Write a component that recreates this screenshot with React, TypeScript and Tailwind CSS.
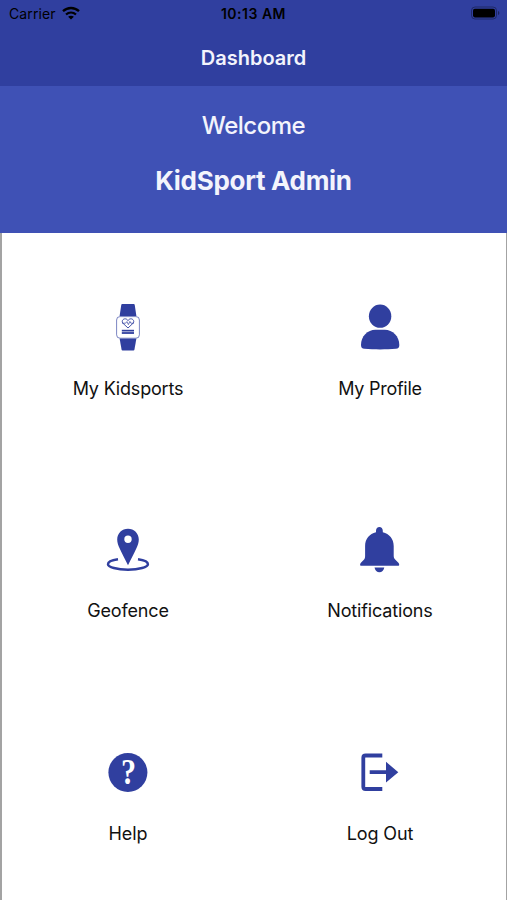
import React from 'react';
import { clsx } from 'clsx';

function WatchIcon() {
  return (
    <svg viewBox="0 0 48 48" className="w-12 h-12" fill="currentColor">
      <path d="M18.2 1h11.6c.5 0 .8.3.9.8L32.4 13H15.6l1.7-11.2c.1-.5.4-.8.9-.8z" />
      <path d="M15.6 35.5h16.8l-2 11.2c-.1.5-.4.8-.9.8h-11c-.5 0-.8-.3-.9-.8z" />
      <rect x="12.6" y="13.6" width="22.8" height="21.6" rx="3.4" fill="#fff" stroke="currentColor" strokeWidth="0.8" strokeOpacity="0.8" />
      <path d="M24 25l-5.200-4.900c-1.700-2.400.9-5.200 3.600-4 .7.3 1.300.9 1.600 1.500.3-.6.9-1.200 1.600-1.500 2.700-1.200 5.300 1.600 3.600 4z" fill="none" stroke="currentColor" strokeWidth="0.9" />
      <path d="M18 20.2h3.6l1.3-1.6 1.5 3 1.500-3.200 1 1.800H30" fill="none" stroke="currentColor" strokeWidth="0.7" />
      <rect x="17.8" y="26.8" width="12.2" height="1.7" />
      <rect x="17.8" y="29.1" width="12.2" height="1.8" />
    </svg>
  );
}

function ProfileIcon() {
  return (
    <svg viewBox="0 0 48 48" className="w-12 h-12" fill="currentColor">
      <ellipse cx="24.1" cy="13.2" rx="11.2" ry="11.6" />
      <path d="M19.5 26.8h9.2c8 0 14.6 6.6 14.6 15.2 0 2.4-1 3.5-3.4 3.8-9.8.8-21.8.8-31.5 0C6 45.500 5 44.400 5 42c0-8.600 6.500-15.200 14.500-15.200z" />
    </svg>
  );
}

function GeofenceIcon() {
  return (
    <svg viewBox="0 0 48 48" className="w-12 h-12" fill="currentColor">
      <path fillRule="evenodd" d="M24 3.700c-6.100 0-10.800 4.700-10.800 10.700 0 3.200 1 6 2.500 9.200 2.300 5 5.600 11.400 8.300 16.700 2.700-5.300 6-11.700 8.300-16.700 1.500-3.200 2.500-6 2.500-9.200 0-6-4.700-10.700-10.800-10.700zm0 6.900a3.700 3.700 0 1 1 0 7.400 3.700 3.700 0 0 1 0-7.400z" />
      <path d="M14 34.300c-6 .8-10 2.700-10 4.900 0 3 9 5.500 20 5.500s19.900-2.500 19.900-5.500c0-2.200-4-4.100-9.900-4.900" fill="none" stroke="currentColor" strokeWidth="2.500" />
    </svg>
  );
}

function BellIcon() {
  return (
    <svg viewBox="0 0 48 48" className="w-12 h-12" fill="currentColor">
      <path d="M23.400 2c2 0 3.400 1.500 3.400 3.700v1.500c6.500 1.500 10.900 6.700 10.900 13.700v9.600c0 2 .4 3 1.700 4.300l3 3c.6.600.8 1.200.8 1.900 0 .7-.4 1.100-1.100 1.100H5.200c-.7 0-1.100-.4-1.100-1.100 0-.7.200-1.300.8-1.900l2.700-2.700c1.200-1.200 1.500-2.200 1.500-4.300v-9.900c0-7 4.400-12.200 10.900-13.700V5.700C20 3.500 21.400 2 23.400 2z" />
      <path d="M18.500 42.600h9.800c-.6 3-2.400 4.700-4.900 4.700s-4.300-1.700-4.900-4.700z" />
    </svg>
  );
}

function HelpIcon() {
  return (
    <svg viewBox="0 0 48 48" className="w-12 h-12" fill="currentColor">
      <circle cx="23.900" cy="24.500" r="19.500" />
      <text
        transform="translate(24.600 36) scale(0.860 1)"
        textAnchor="middle"
        fill="#fff"
        className="font-['Liberation_Serif',serif] font-bold text-[35px]"
      >
        ?
      </text>
    </svg>
  );
}

function LogoutIcon() {
  return (
    <svg viewBox="0 0 48 48" className="w-12 h-12" fill="currentColor">
      <path d="M26.300 7.500H9.600c-1.500 0-2.300.8-2.300 2.300v28.900c0 1.500.8 2.300 2.300 2.300h16.700" fill="none" stroke="currentColor" strokeWidth="3.800" />
      <path d="M13.700 22.300h16.300v-8.500l12.300 10.400L30 34.500V26.100H13.700z" />
    </svg>
  );
}

const items = [
  { label: 'My Kidsports', icon: WatchIcon, spacing: 'tracking-[-0.18px]' },
  { label: 'My Profile', icon: ProfileIcon, spacing: 'tracking-[-0.25px]' },
  { label: 'Geofence', icon: GeofenceIcon, spacing: 'tracking-[-0.15px]' },
  { label: 'Notifications', icon: BellIcon, spacing: 'tracking-[-0.15px]' },
  { label: 'Help', icon: HelpIcon, spacing: 'tracking-[-0.1px]' },
  { label: 'Log Out', icon: LogoutIcon, spacing: 'tracking-[-0.1px]' },
];

function StatusBar() {
  return (
    <div className="h-7 grid grid-cols-3 items-center px-2 text-black text-sm leading-7">
      <div className="flex items-center gap-1.5 pl-px">
        <span className="tracking-[0.1px]">Carrier</span>
        <svg viewBox="0 0 18 14" className="w-[18px] h-3.5 -mt-0.5" fill="none" stroke="currentColor">
          <path d="M1 5.200c4.600-4.300 11.400-4.300 16 0" strokeWidth="2.300" />
          <path d="M4 8.500c3-2.700 7-2.700 10 0" strokeWidth="2.200" />
          <path d="M9 13.600l-2.900-2.900c1.600-1.400 4.200-1.400 5.800 0z" fill="currentColor" stroke="none" />
        </svg>
      </div>
      <span className="text-center font-semibold tracking-[0.5px]">10:13 AM</span>
      <svg viewBox="0 0 30 14" className="w-[30px] h-3.5 justify-self-end -mt-0.5 -mr-px">
        <rect x="1.500" y="1" width="25" height="12" rx="3.500" fill="none" stroke="#000" strokeOpacity="0.35" />
        <rect x="3" y="2.700" width="22" height="8.700" rx="1.800" />
        <path d="M28 5c1.800.5 1.800 3.500 0 4z" fillOpacity="0.4" />
      </svg>
    </div>
  );
}

export default function App() {
  return (
    <div className="w-full h-[900px] flex flex-col bg-white font-['Inter',sans-serif] overflow-hidden">
      <header className="h-[86px] bg-[#303f9f]">
        <StatusBar />
        <h1 className="text-center text-[#f3f4fc] font-semibold text-xl leading-[60px]">Dashboard</h1>
      </header>

      <section className="h-[147px] bg-[#3f51b5] text-[#f3f4fc] text-center pt-5">
        <p className="text-2xl leading-10 font-medium tracking-[-0.5px]">Welcome</p>
        <p className="text-[26px] leading-10 font-bold mt-[15px] tracking-[-0.3px]">KidSport Admin</p>
      </section>

      <main className="flex-1 grid grid-cols-2 grid-rows-3 border-l-2 border-r border-[#a3a3a3]">
        {items.map(({ label, icon: Icon, spacing }) => (
          <button key={label} type="button" className="flex flex-col items-center pt-[70px] text-[#303f9f]">
            <Icon />
            <span className={clsx('mt-[25px] text-lg leading-[26px] text-[#111]', spacing)}>{label}</span>
          </button>
        ))}
      </main>
    </div>
  );
}
